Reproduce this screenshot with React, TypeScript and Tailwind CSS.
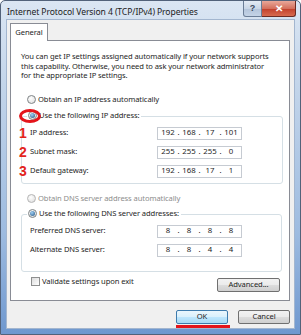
import React, { Fragment } from "react";

function Radio({ checked, dim }: { checked?: boolean; dim?: boolean }) {
  return (
    <span
      className={`flex h-[9px] w-[9px] shrink-0 items-center justify-center rounded-full border ${
        dim ? "border-[#b5b5b5]" : "border-[#7f8486]"
      } bg-[radial-gradient(circle_at_40%_35%,#ffffff,#dadada)]`}
    >
      {checked && (
        <span className="h-[5px] w-[5px] rounded-full bg-[radial-gradient(circle_at_40%_35%,#9fd0f5,#23527f)]" />
      )}
    </span>
  );
}

function IpField({ parts }: { parts: string[] }) {
  return (
    <div className="flex h-[13px] w-[85px] items-center border border-[#c6cbd2] bg-white pl-[2px] text-[7.8px] leading-none tracking-normal text-[#1e1e1e]">
      {parts.map((p, i) => (
        <Fragment key={i}>
          <span className="w-[16px] text-center">{p}</span>
          {i < 3 && <span className="w-[5px] text-center">.</span>}
        </Fragment>
      ))}
    </div>
  );
}

function Row({ num, label, parts }: { num?: string; label: string; parts: string[] }) {
  return (
    <div className="relative flex h-[13px] items-center pl-[8px]">
      {num && (
        <span className="absolute left-[-3px] top-[-1px] font-['Liberation_Sans',sans-serif] text-[14px] font-bold leading-[14px] tracking-normal text-[#e3241d]">
          {num}
        </span>
      )}
      <span className="w-[127px] whitespace-nowrap leading-none">{label}</span>
      <IpField parts={parts} />
    </div>
  );
}

function Btn({ children, def, w }: { children: React.ReactNode; def?: boolean; w: string }) {
  return (
    <div
      className={`${w} flex h-[14px] items-center justify-center rounded-[2px] border ${
        def
          ? "border-[#3d7bad] bg-[linear-gradient(to_bottom,#eaf6fd,#d9f0fc_50%,#bee6fd_51%,#a7d9f5)]"
          : "border-[#707070] bg-[linear-gradient(to_bottom,#f2f2f2,#ebebeb_50%,#dddddd_51%,#cfcfcf)]"
      } leading-none text-[#1e1e1e]`}
    >
      {children}
    </div>
  );
}

export default function App() {
  return (
    <div className="flex h-[335px] w-[301px] flex-col overflow-hidden rounded-t-[5px] border border-[#52627a] bg-[linear-gradient(to_bottom,#dbe6f3,#c3d5ea_25%,#9dbbe0_70%,#6f98cf)] font-['Noto_Sans',sans-serif] text-[7.6px] tracking-[-0.1px] text-[#1e1e1e]">
      {/* title bar */}
      <div className="flex h-[18px] shrink-0 items-start">
        <div className="whitespace-nowrap pl-[6px] pt-[6px] text-[8.6px] leading-[10px] text-[#1b1b1b]">
          Internet Protocol Version 4 (TCP/IPv4) Properties
        </div>
        <div className="ml-auto mr-[4px] flex">
          <div className="flex h-[16px] w-[19px] items-center justify-center rounded-bl-[3px] border border-t-0 border-[#6b7d96] bg-[linear-gradient(to_bottom,#e4ebf4,#c9d6e6_50%,#b3c4da_51%,#c4d3e6)] font-['Liberation_Sans',sans-serif] text-[9px] font-bold leading-none text-[#3b4a5e]">
            ?
          </div>
          <div className="flex h-[16px] w-[34px] items-center justify-center rounded-br-[3px] border border-l-0 border-t-0 border-[#6b2a22] bg-[linear-gradient(to_bottom,#e9a899,#d4705d_50%,#c13f2b_51%,#d76a4f)] font-['Liberation_Sans',sans-serif] text-[10px] font-bold leading-none text-white">
            ✕
          </div>
        </div>
      </div>

      {/* client */}
      <div className="mx-[5px] mb-[5px] flex flex-1 flex-col border border-[#a3b6cf] bg-[#f0f0f0] pl-[3px] pr-[4px] pt-[3px]">
        <div className="relative z-10 -mb-px flex h-[18px] w-[38px] items-center justify-center border border-b-0 border-[#898c95] bg-white leading-none">
          General
        </div>
        <div className="flex h-[261px] w-[280px] flex-col border border-[#898c95] bg-white">
          <div className="pl-[10px] pt-[11px] leading-[9.5px]">
            <div className="whitespace-nowrap">You can get IP settings assigned automatically if your network supports</div>
            <div className="whitespace-nowrap">this capability. Otherwise, you need to ask your network administrator</div>
            <div className="whitespace-nowrap">for the appropriate IP settings.</div>
          </div>

          <div className="mt-[13px] flex h-[12px] items-center gap-[2px] pl-[16px]">
            <Radio />
            <span className="leading-none">Obtain an IP address automatically</span>
          </div>

          <div className="ml-[10px] mt-[10px] w-[262px] rounded-[3px] border border-[#d5dfe5] pb-[5px]">
            <div className="relative -mt-[7px] ml-[5px] flex h-[12px] w-fit items-center gap-[2px] bg-white pl-[1px] pr-[2px]">
              <Radio checked />
              <span className="leading-none">Use the following IP address:</span>
              <span className="absolute left-[-8px] top-[-1px] h-[14px] w-[22px] rounded-[50%] border-[3px] border-[#e4141b]" />
            </div>
            <div className="mt-[5px] flex flex-col gap-[6px]">
              <Row num="1" label="IP address:" parts={["192", "168", "17", "101"]} />
              <Row num="2" label="Subnet mask:" parts={["255", "255", "255", "0"]} />
              <Row num="3" label="Default gateway:" parts={["192", "168", "17", "1"]} />
            </div>
          </div>

          <div className="mt-[9px] flex h-[12px] items-center gap-[2px] pl-[16px]">
            <Radio dim />
            <span className="leading-none text-[#8d8d8d]">Obtain DNS server address automatically</span>
          </div>

          <div className="ml-[10px] mt-[9px] w-[261px] rounded-[3px] border border-[#d5dfe5] pb-[14px]">
            <div className="-mt-[7px] ml-[5px] flex h-[12px] w-fit items-center gap-[2px] bg-white pl-[1px] pr-[2px]">
              <Radio checked />
              <span className="leading-none">Use the following DNS server addresses:</span>
            </div>
            <div className="mt-[5px] flex flex-col gap-[6px]">
              <Row label="Preferred DNS server:" parts={["8", "8", "8", "8"]} />
              <Row label="Alternate DNS server:" parts={["8", "8", "4", "4"]} />
            </div>
          </div>

          <div className="mt-[4px] flex items-start justify-between pr-[9px]">
            <div className="ml-[20px] flex h-[12px] items-center gap-[2px]">
              <span className="h-[9px] w-[9px] border border-[#8e8f8f] bg-[linear-gradient(135deg,#dcdcdc,#ffffff)]" />
              <span className="leading-none">Validate settings upon exit</span>
            </div>
            <div className="mt-[2px]">
              <Btn w="w-[63px]">Advanced...</Btn>
            </div>
          </div>
        </div>

        <div className="mt-[9px] flex items-start justify-end gap-[8px]">
          <div className="flex flex-col">
            <Btn def w="w-[52px]">OK</Btn>
            <div className="mt-[1px] h-[3px] w-[54px] bg-[#e4141b]" />
          </div>
          <Btn w="w-[52px]">Cancel</Btn>
        </div>
      </div>
    </div>
  );
}
